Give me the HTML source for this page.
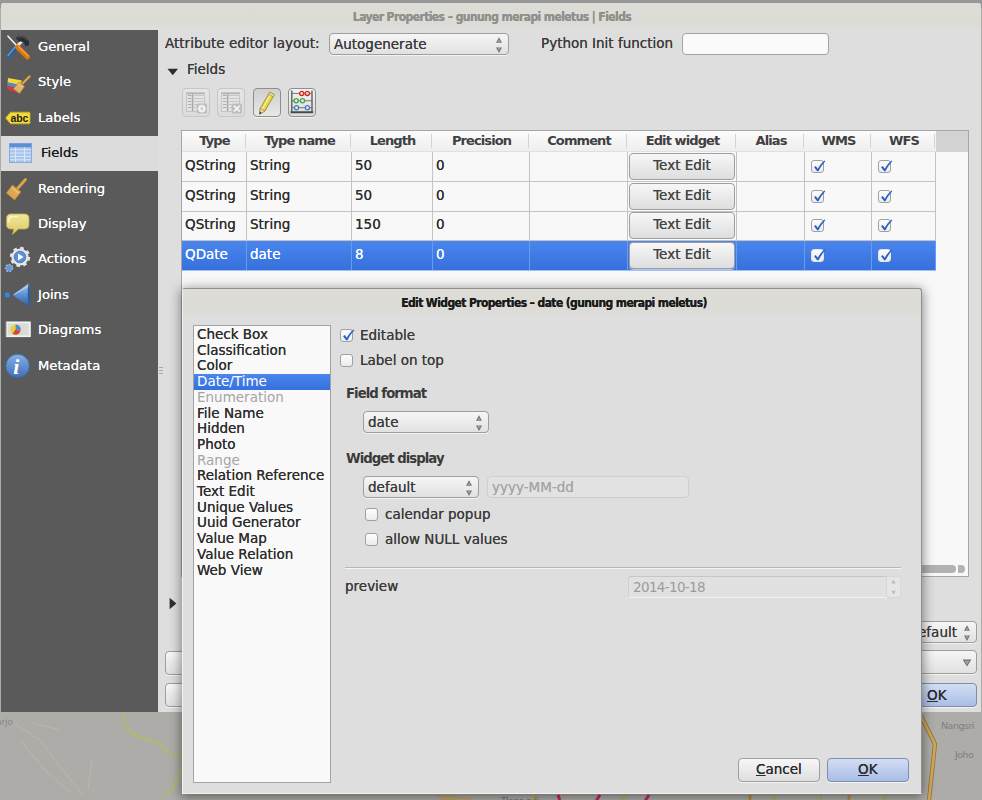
<!DOCTYPE html>
<html>
<head>
<meta charset="utf-8">
<title>Layer Properties</title>
<style>
*{box-sizing:border-box;margin:0;padding:0}
html,body{width:982px;height:800px;overflow:hidden}
body{position:relative;background:#adaca8;font-family:"DejaVu Sans","Liberation Sans",sans-serif;font-size:13.5px;color:#3c3c3c;}
.abs{position:absolute}
.t{position:absolute;white-space:nowrap;line-height:16px;text-shadow:0 0 0.3px}
.combo .tx{text-shadow:0 0 0.3px}
/* main window */
#topband{left:0;top:0;width:982px;height:8px;background:#979699}
#win{left:1px;top:3px;width:980px;height:709px;background:#dedede;border-radius:3px 3px 0 0;overflow:hidden}
#titlebar{left:0;top:0;width:980px;height:27px;background:linear-gradient(#dddcd7 0,#dcdbd5 75%,#dedede 100%)}
#title{left:0;top:7px;width:982px;text-align:center;font-family:"DejaVu Sans Condensed","DejaVu Sans","Liberation Sans",sans-serif;font-size:12px;font-weight:bold;color:#8f8f8c;line-height:14px;letter-spacing:-0.58px}
#side{left:0;top:26.5px;width:157px;height:682.5px;background:#5a5a5a}
.si{position:absolute;left:0;width:157px;height:35.4px}
.si .lb{position:absolute;left:37px;top:8.5px;color:#fff;font-size:13.15px;line-height:17px;white-space:nowrap;text-shadow:0 0 0.6px #fff}
.si.sel{background:#dcdcdc}
.si.sel .lb{color:#1e1e1e;left:40px;text-shadow:0 0 0.6px #1e1e1e}
.si svg{position:absolute;left:4px;top:4px}
/* widgets */
.combo{position:absolute;border:1px solid #9e9e9e;border-radius:4px;background:linear-gradient(#f6f6f6,#e1e1e1);box-shadow:0 1px 0 rgba(255,255,255,.6)}
.combo .tx{position:absolute;left:4px;top:2px;line-height:16px;white-space:nowrap}
.input{position:absolute;border:1px solid #a3a3a3;border-radius:4px;background:#fafafa}
.btn{position:absolute;border:1px solid #9e9e9e;border-radius:4px;background:linear-gradient(#f7f7f7,#dedede);text-align:center;box-shadow:0 1px 0 rgba(255,255,255,.6)}
.btn.def{border-color:#7d8db0;background:linear-gradient(#d3def3,#a9bde6)}
.cb{position:absolute;width:13px;height:13px;border:1px solid #a0a0a0;border-radius:3px;background:linear-gradient(#fdfdfd,#ececec)}
.cb svg{position:absolute;left:-1px;top:-3px}
/* table */
#tbl{left:180px;top:127px;width:788px;height:447px;border:1px solid #a6a6a6;background:#f8f8f8}
.hd{position:absolute;top:0;height:21px;background:linear-gradient(#fbfbfb,#eeeeee);font-weight:bold;text-align:center;line-height:20px;font-size:13px;color:#404040;letter-spacing:-0.9px;border-bottom:1px solid #e0e0e0}
.row{position:absolute;left:0;width:754px;height:30px;border-bottom:1px solid #c4c4c4}
.cell{text-shadow:0 0 0.35px currentColor;color:#2e2e2e;position:absolute;top:0;height:29px;border-right:1px solid #c4c4c4;line-height:27px;padding-left:3px;white-space:nowrap}
.row.sel{background:linear-gradient(#4a86ee,#3670dc)}
.row.sel .cell{color:#fff}
.row.sel .cb{border-color:#e4e4e4}
.row.sel{border-bottom-color:#a4c0f2}
.row.sel .cell{border-right-color:#6c9af0}
.t.b{text-shadow:none;font-weight:bold;font-size:13.3px;letter-spacing:-1px;color:#3a3a3a}
.input.dis{background:#e2e2e2;border-color:#cfcfcf}
.hd:after{content:"";position:absolute;right:1px;top:3px;height:14px;width:1px;background:#d4d4d4}
/* dialog */
#dlg{left:182px;top:288px;width:740px;height:506px;background:#dedede;box-shadow:0 2px 12px 1px rgba(0,0,0,.45);border-radius:3px 3px 0 0}
#dlg:before{content:"";position:absolute;left:0;top:0;right:0;bottom:0;border-top:1px solid #8e8e8e;border-right:1px solid #8e8e8e;border-left:1px solid #f2f2f2;border-bottom:1px solid #f2f2f2;border-radius:3px 3px 0 0;z-index:3;pointer-events:none}
#dtitlebar{left:0;top:0;width:740px;height:29px;background:linear-gradient(#dddcd7 0,#dcdbd6 75%,#dedede 100%);border-radius:3px 3px 0 0}
#dtitle{left:0;top:8px;width:739px;padding-left:5px;text-align:center;font-family:"DejaVu Sans Condensed","DejaVu Sans","Liberation Sans",sans-serif;font-size:12px;font-weight:bold;color:#1c1c1c;line-height:14px;letter-spacing:-0.61px}
#list{left:11px;top:37px;width:138px;height:458px;padding-top:0;border:1px solid #a3a3a3;background:#f9f9f9}
.li{position:absolute;margin-top:1px;left:0;width:136px;height:15.7px;line-height:15.7px;padding-left:3px;white-space:nowrap;color:#2e2e2e;text-shadow:0 0 0.35px #2e2e2e}
.li.dis{color:#a5a5a5;text-shadow:none}
.li.sel{background:linear-gradient(#4a86ee,#3670dc);color:#fff;text-shadow:none}
</style>
</head>
<body>
<div class="abs" id="topband"></div>

<!-- map fragments -->
<svg class="abs" style="left:0;top:712px" width="982" height="88" viewBox="0 712 982 88">
  <rect x="0" y="712" width="982" height="88" fill="#adaca8"/>
  <path d="M123 712 C123 724 128 733 138 736 C152 740 160 743 166 750 C171 756 177 757 182 756" fill="none" stroke="#b5ba68" stroke-width="1.9"/>
  <path d="M182 766 C178 776 176 784 172 790 C170 793 167 790 164 794" fill="none" stroke="#b5ba68" stroke-width="1.9"/>
  <path d="M12 722 L40 740 L58 764 L84 796 M20 740 L45 770 L70 792 M88 790 L92 760 M60 730 L30 722" fill="none" stroke="#b9b7b1" stroke-width="1"/>
  <path d="M921 716 L935 744 L929 800" fill="none" stroke="#8f7440" stroke-width="4.2" stroke-linejoin="round"/>
  <path d="M921 716 L935 744 L929 800" fill="none" stroke="#d2a954" stroke-width="2.6" stroke-linejoin="round"/>
  <text x="941" y="729" font-size="9.5" fill="#7f7f7c" font-family="DejaVu Sans, Liberation Sans, sans-serif" letter-spacing="-0.5">Nangsri</text>
  <text x="955" y="758" font-size="9.5" fill="#7f7f7c" font-family="DejaVu Sans, Liberation Sans, sans-serif" letter-spacing="-0.5">Joho</text>
  <text x="-4" y="725" font-size="9.5" fill="#8a8a86" font-family="DejaVu Sans, Liberation Sans, sans-serif" letter-spacing="-0.4">arjo</text>
  <!-- strip below the dialog -->
  <path d="M437 796 C450 797 462 797 471 800 M440 800 C452 799 460 800 466 802" fill="none" stroke="#c9a352" stroke-width="1.6"/>
  <text x="501" y="804" font-size="9" fill="#77777a" font-family="DejaVu Sans, Liberation Sans, sans-serif" letter-spacing="-0.4">Tlogo adi</text>
  <path d="M536 795 L532 801" fill="none" stroke="#c9a93a" stroke-width="2"/>
  <path d="M558 795 L560 801 M600 795 L596 801 M649 795 L645 801" fill="none" stroke="#bf2d5c" stroke-width="3"/>
  <path d="M626 795 L622 801 M772 795 L776 801 M821 795 L821 801 M887 795 L883 801" fill="none" stroke="#a9b45a" stroke-width="2"/>
  <path d="M750 795 V801 M849 795 V801" fill="none" stroke="#b98f45" stroke-width="3"/>
</svg>

<div class="abs" id="win">
  <div class="abs" id="titlebar"></div>
  <div class="t" id="title">Layer Properties – gunung merapi meletus | Fields</div>
  <div class="abs" id="side">
    <div class="si" style="top:0"><span class="lb">General</span></div>
    <div class="si" style="top:35.4px"><span class="lb">Style</span></div>
    <div class="si" style="top:70.8px"><span class="lb">Labels</span></div>
    <div class="si sel" style="top:106.2px"><span class="lb">Fields</span></div>
    <div class="si" style="top:141.6px"><span class="lb">Rendering</span></div>
    <div class="si" style="top:177px"><span class="lb">Display</span></div>
    <div class="si" style="top:212.4px"><span class="lb">Actions</span></div>
    <div class="si" style="top:247.8px"><span class="lb">Joins</span></div>
    <div class="si" style="top:283.2px"><span class="lb">Diagrams</span></div>
    <div class="si" style="top:318.6px"><span class="lb">Metadata</span></div>
  </div>

  <div class="abs" style="left:158px;top:364px;width:4px;height:7px;border-top:1px solid #a8a8a8;border-bottom:1px solid #a8a8a8"><div class="abs" style="left:0;top:2px;width:4px;height:1px;background:#a8a8a8"></div></div>
  <!-- top controls -->
  <div class="t" style="left:164px;top:32px">Attribute editor layout:</div>
  <div class="combo" style="left:328px;top:30px;width:180px;height:22px"><span class="tx">Autogenerate</span><svg class="abs" style="right:5px;top:3px" width="8" height="17" viewBox="0 -0.5 8 17" overflow="visible"><path d="M4 -0.2 L7 5.2 L1 5.2 Z" fill="#757575"/><path d="M1 9.9 L7 9.9 L4 15.4 Z" fill="#757575"/><path d="M4 2 L5.2 4.3 L2.8 4.3 Z" fill="#e9e9e9" opacity=".5"/><path d="M2.8 10.8 L5.2 10.8 L4 13 Z" fill="#e9e9e9" opacity=".5"/></svg></div>
  <div class="t" style="left:540px;top:32px">Python Init function</div>
  <div class="input" style="left:681px;top:30px;width:147px;height:22px"></div>
  <div class="t" style="left:186px;top:58px">Fields</div>


  <!-- collapse triangle + toolbar -->
  <svg class="abs" style="left:165.5px;top:65px" width="12" height="8" viewBox="0 0 12 8"><path d="M0.5 0.8 L11 0.8 L5.75 7.2 Z" fill="#2e2e2e"/></svg>
  <div class="btn tb" style="left:181px;top:85px;width:28px;height:29px;border-color:#c6c6c6;background:linear-gradient(#e6e6e6,#dcdcdc);box-shadow:none">
    <svg class="abs" style="left:-1px;top:-1px" width="28" height="29" viewBox="0 0 28 29"><rect x="4.5" y="4.5" width="18" height="19" fill="#e4e4e4" stroke="#c2c2c2" stroke-width="0.9"/><path d="M10.6 5 V23" stroke="#a9a9a9" stroke-width="1.5"/><path d="M6 7.5 H9.4 M6 10.5 H9.4 M6 13.5 H9.4 M6 16.5 H9.4 M6 19.5 H9.4" stroke="#adadad" stroke-width="1"/><path d="M12 7.5 H21.5 M12 10.5 H21.5 M12 13.5 H21.5 M12 16.5 H21.5 M12 19.5 H21.5" stroke="#c6c6c6" stroke-width="1"/><path d="M5 5.6 H22" stroke="#b5b5b5" stroke-width="1.2"/><rect x="14.6" y="15.6" width="10.4" height="10" rx="1.4" fill="#bdbdbd"/><circle cx="19.8" cy="20.6" r="2.9" fill="none" stroke="#f2f2f2" stroke-width="1.5"/><path d="M19.8 16.4 V24.8 M15.6 20.6 H24 M16.9 17.7 L22.7 23.5 M22.7 17.7 L16.9 23.5" stroke="#f2f2f2" stroke-width="1.1"/><circle cx="19.8" cy="20.6" r="1.2" fill="#bdbdbd"/></svg>
  </div>
  <div class="btn tb" style="left:216px;top:85px;width:28px;height:29px;border-color:#c6c6c6;background:linear-gradient(#e6e6e6,#dcdcdc);box-shadow:none">
    <svg class="abs" style="left:-1px;top:-1px" width="28" height="29" viewBox="0 0 28 29"><rect x="4.5" y="4.5" width="18" height="19" fill="#e4e4e4" stroke="#c2c2c2" stroke-width="0.9"/><path d="M10.6 5 V23" stroke="#a9a9a9" stroke-width="1.5"/><path d="M6 7.5 H9.4 M6 10.5 H9.4 M6 13.5 H9.4 M6 16.5 H9.4 M6 19.5 H9.4" stroke="#adadad" stroke-width="1"/><path d="M12 7.5 H21.5 M12 10.5 H21.5 M12 13.5 H21.5 M12 16.5 H21.5 M12 19.5 H21.5" stroke="#c6c6c6" stroke-width="1"/><path d="M5 5.6 H22" stroke="#b5b5b5" stroke-width="1.2"/><rect x="14.6" y="15.6" width="10.4" height="10" rx="1.4" fill="#bdbdbd"/><path d="M16.8 17.6 L22.8 23.6 M22.8 17.6 L16.8 23.6" stroke="#f4f4f4" stroke-width="1.7"/></svg>
  </div>
  <div class="btn tb" style="left:252px;top:85px;width:28px;height:29px;border-color:#8e8e8e;background:linear-gradient(#d0d0d0,#e8e8e8)">
    <svg class="abs" style="left:-1px;top:-1px" width="28" height="29" viewBox="0 0 28 29"><path d="M16.6 4.2 L21.4 6.6 L12 23 L6.6 26.2 L7.2 20.4 Z" fill="#e6d248" stroke="#9d8f2c" stroke-width="0.9" stroke-linejoin="round"/><path d="M18.2 5.6 L9 21.6" stroke="#f6ec9a" stroke-width="1.4"/><path d="M16.6 4.2 L21.4 6.6 L20.2 8.8 L15.4 6.3 Z" fill="#e3e0b0" stroke="#9d8f2c" stroke-width="0.6"/><path d="M7.2 20.4 L12 23 L6.6 26.2 Z" fill="#e9d9b8" stroke="#8c7a4a" stroke-width="0.6"/><path d="M6.9 23.6 L8.6 24.9 L6.6 26.2 Z" fill="#2e2e2e"/></svg>
  </div>
  <div class="btn tb" style="left:287px;top:85px;width:28px;height:29px;border-color:#8e8e8e;background:linear-gradient(#f2f2f2,#dcdcdc)">
    <svg class="abs" style="left:-1px;top:-1px" width="28" height="29" viewBox="0 0 28 29"><path d="M3.8 2.4 V24 M24 2.4 V24" stroke="#555" stroke-width="1.3"/><path d="M3.8 5.4 H24 M3.8 12.8 H24 M3.8 19.7 H24" stroke="#6a6a6a" stroke-width="0.9"/><path d="M2.6 24.2 H25.2" stroke="#4a4a4a" stroke-width="1.9"/><circle cx="13.7" cy="5.4" r="2.1" fill="#f6d6d6" stroke="#cf2a2a" stroke-width="1.3"/><circle cx="19.3" cy="5.4" r="2.1" fill="#f6d6d6" stroke="#cf2a2a" stroke-width="1.3"/><circle cx="8.2" cy="12.8" r="2.1" fill="#d9efd9" stroke="#49a24a" stroke-width="1.3"/><circle cx="14.5" cy="12.8" r="2.1" fill="#d9efd9" stroke="#49a24a" stroke-width="1.3"/><circle cx="8.5" cy="19.7" r="2.1" fill="#dbe8f5" stroke="#3f7fbe" stroke-width="1.3"/><circle cx="19.4" cy="19.7" r="2.1" fill="#dbe8f5" stroke="#3f7fbe" stroke-width="1.3"/></svg>
  </div>

  <!-- table -->
  <div class="abs" id="tbl">
    <div class="abs" style="left:0;top:0;width:786px;height:21px;background:#d2d2d2"></div>
    <div class="hd" style="left:0;width:65px">Type</div>
    <div class="hd" style="left:65px;width:105px">Type name</div>
    <div class="hd" style="left:170px;width:81px">Length</div>
    <div class="hd" style="left:251px;width:97px">Precision</div>
    <div class="hd" style="left:348px;width:98px">Comment</div>
    <div class="hd" style="left:446px;width:109px">Edit widget</div>
    <div class="hd" style="left:555px;width:68px">Alias</div>
    <div class="hd" style="left:623px;width:67px">WMS</div>
    <div class="hd" style="left:690px;width:64px">WFS</div>
    <div class="row" style="top:21.0px"><div class="cell" style="left:0px;width:65px">QString</div><div class="cell" style="left:65px;width:105px">String</div><div class="cell" style="left:170px;width:81px">50</div><div class="cell" style="left:251px;width:97px">0</div><div class="cell" style="left:348px;width:98px"></div><div class="cell" style="left:446px;width:109px;padding:0"><div class="btn" style="left:1px;top:1px;width:106px;height:27px;line-height:23px;color:#454545;text-shadow:0 0 0.2px">Text Edit</div></div><div class="cell" style="left:555px;width:68px"></div><div class="cell" style="left:623px;width:67px"><div class="cb" style="left:6px;top:8px"><svg width="16" height="17" viewBox="0 0 16 17"><path d="M3.1 9.3 L4.7 7.9 L6.8 10.8 C8.6 7.5 10.6 4.9 13.6 2.5 L14.3 3.3 C11.7 6.1 9.6 9.3 7.5 13.2 L6.2 13.2 Z" fill="#2a5fc4"/></svg></div></div><div class="cell" style="left:690px;width:64px"><div class="cb" style="left:6px;top:8px"><svg width="16" height="17" viewBox="0 0 16 17"><path d="M3.1 9.3 L4.7 7.9 L6.8 10.8 C8.6 7.5 10.6 4.9 13.6 2.5 L14.3 3.3 C11.7 6.1 9.6 9.3 7.5 13.2 L6.2 13.2 Z" fill="#2a5fc4"/></svg></div></div></div>
    <div class="row" style="top:50.5px"><div class="cell" style="left:0px;width:65px">QString</div><div class="cell" style="left:65px;width:105px">String</div><div class="cell" style="left:170px;width:81px">50</div><div class="cell" style="left:251px;width:97px">0</div><div class="cell" style="left:348px;width:98px"></div><div class="cell" style="left:446px;width:109px;padding:0"><div class="btn" style="left:1px;top:1px;width:106px;height:27px;line-height:23px;color:#454545;text-shadow:0 0 0.2px">Text Edit</div></div><div class="cell" style="left:555px;width:68px"></div><div class="cell" style="left:623px;width:67px"><div class="cb" style="left:6px;top:8px"><svg width="16" height="17" viewBox="0 0 16 17"><path d="M3.1 9.3 L4.7 7.9 L6.8 10.8 C8.6 7.5 10.6 4.9 13.6 2.5 L14.3 3.3 C11.7 6.1 9.6 9.3 7.5 13.2 L6.2 13.2 Z" fill="#2a5fc4"/></svg></div></div><div class="cell" style="left:690px;width:64px"><div class="cb" style="left:6px;top:8px"><svg width="16" height="17" viewBox="0 0 16 17"><path d="M3.1 9.3 L4.7 7.9 L6.8 10.8 C8.6 7.5 10.6 4.9 13.6 2.5 L14.3 3.3 C11.7 6.1 9.6 9.3 7.5 13.2 L6.2 13.2 Z" fill="#2a5fc4"/></svg></div></div></div>
    <div class="row" style="top:80.0px"><div class="cell" style="left:0px;width:65px">QString</div><div class="cell" style="left:65px;width:105px">String</div><div class="cell" style="left:170px;width:81px">150</div><div class="cell" style="left:251px;width:97px">0</div><div class="cell" style="left:348px;width:98px"></div><div class="cell" style="left:446px;width:109px;padding:0"><div class="btn" style="left:1px;top:1px;width:106px;height:27px;line-height:23px;color:#454545;text-shadow:0 0 0.2px">Text Edit</div></div><div class="cell" style="left:555px;width:68px"></div><div class="cell" style="left:623px;width:67px"><div class="cb" style="left:6px;top:8px"><svg width="16" height="17" viewBox="0 0 16 17"><path d="M3.1 9.3 L4.7 7.9 L6.8 10.8 C8.6 7.5 10.6 4.9 13.6 2.5 L14.3 3.3 C11.7 6.1 9.6 9.3 7.5 13.2 L6.2 13.2 Z" fill="#2a5fc4"/></svg></div></div><div class="cell" style="left:690px;width:64px"><div class="cb" style="left:6px;top:8px"><svg width="16" height="17" viewBox="0 0 16 17"><path d="M3.1 9.3 L4.7 7.9 L6.8 10.8 C8.6 7.5 10.6 4.9 13.6 2.5 L14.3 3.3 C11.7 6.1 9.6 9.3 7.5 13.2 L6.2 13.2 Z" fill="#2a5fc4"/></svg></div></div></div>
    <div class="row sel" style="top:109.5px"><div class="cell" style="left:0px;width:65px">QDate</div><div class="cell" style="left:65px;width:105px">date</div><div class="cell" style="left:170px;width:81px">8</div><div class="cell" style="left:251px;width:97px">0</div><div class="cell" style="left:348px;width:98px"></div><div class="cell" style="left:446px;width:109px;padding:0"><div class="btn" style="left:1px;top:1px;width:106px;height:27px;line-height:23px;color:#454545;text-shadow:0 0 0.2px">Text Edit</div></div><div class="cell" style="left:555px;width:68px"></div><div class="cell" style="left:623px;width:67px"><div class="cb" style="left:6px;top:8px"><svg width="16" height="17" viewBox="0 0 16 17"><path d="M3.1 9.3 L4.7 7.9 L6.8 10.8 C8.6 7.5 10.6 4.9 13.6 2.5 L14.3 3.3 C11.7 6.1 9.6 9.3 7.5 13.2 L6.2 13.2 Z" fill="#2a5fc4"/></svg></div></div><div class="cell" style="left:690px;width:64px"><div class="cb" style="left:6px;top:8px"><svg width="16" height="17" viewBox="0 0 16 17"><path d="M3.1 9.3 L4.7 7.9 L6.8 10.8 C8.6 7.5 10.6 4.9 13.6 2.5 L14.3 3.3 C11.7 6.1 9.6 9.3 7.5 13.2 L6.2 13.2 Z" fill="#2a5fc4"/></svg></div></div></div>
    <div class="abs" style="left:540px;top:434px;width:234px;height:8px;border-radius:4px;background:#b2b2b2"></div>
    <div class="abs" style="left:776px;top:434px;width:7px;height:8px;border-radius:1px 4px 4px 1px;background:#b2b2b2"></div>
  </div>

  <!-- bottom controls behind dialog -->

  <svg class="abs" style="left:168px;top:594px" width="8" height="13" viewBox="0 0 8 13"><path d="M0.6 0.8 L7.4 6.5 L0.6 12.2 Z" fill="#2e2e2e"/></svg>
  <div class="btn" style="left:164px;top:648px;width:60px;height:24px"></div>
  <div class="btn" style="left:164px;top:680px;width:60px;height:24px"></div>
  <div class="combo" style="left:861px;top:618px;width:115px;height:22px"><span class="tx" style="left:auto;right:19px">default</span><svg class="abs" style="right:5px;top:3px" width="8" height="17" viewBox="0 -0.5 8 17" overflow="visible"><path d="M4 -0.2 L7 5.2 L1 5.2 Z" fill="#757575"/><path d="M1 9.9 L7 9.9 L4 15.4 Z" fill="#757575"/><path d="M4 2 L5.2 4.3 L2.8 4.3 Z" fill="#e9e9e9" opacity=".5"/><path d="M2.8 10.8 L5.2 10.8 L4 13 Z" fill="#e9e9e9" opacity=".5"/></svg></div>
  <div class="combo" style="left:861px;top:647px;width:115px;height:24px"><svg class="abs" style="right:4px;top:8px" width="10" height="8" viewBox="0 0 10 8"><path d="M0.6 0.6 L9.4 0.6 L5 7.4 Z" fill="#6e6e6e"/><path d="M2.6 1.8 L7.4 1.8 L5 5.4 Z" fill="#e9e9e9" opacity=".45"/></svg></div>
  <div class="btn def" style="left:881px;top:680px;width:95px;height:24px"><span class="t" style="left:44px;top:3px;color:#2b2b2b"><u>O</u>K</span></div>
</div>


<!-- sidebar icons (page coordinates) -->
<svg class="abs" style="left:0;top:29px" width="40" height="361" viewBox="0 29 40 361">
  <defs>
    <linearGradient id="gBlue" x1="0" y1="0" x2="0" y2="1"><stop offset="0" stop-color="#86b0e6"/><stop offset="1" stop-color="#3f6fb5"/></linearGradient>
    <linearGradient id="gCone" x1="0" y1="0" x2="0" y2="1"><stop offset="0" stop-color="#a7c6ee"/><stop offset=".5" stop-color="#5b8fd3"/><stop offset="1" stop-color="#2f5f9f"/></linearGradient>
    <linearGradient id="gYel" x1="0" y1="0" x2="0" y2="1"><stop offset="0" stop-color="#f3e79a"/><stop offset="1" stop-color="#dcc763"/></linearGradient>
  </defs>
  <!-- General: hammer + screwdriver -->
  <g>
    <path d="M16 47 L8.5 56.5" stroke="#2d5f9e" stroke-width="4.6" stroke-linecap="round"/>
    <path d="M15.2 46.6 L8 55.6" stroke="#6d9bd6" stroke-width="1.3" stroke-linecap="round"/>
    <path d="M17 46.5 L21.5 41.5" stroke="#e8e4dc" stroke-width="3" />
    <path d="M15.8 38.2 C18.5 34.6 25.5 34.8 29.2 41.6 L28.6 45.8 L25.2 46 C24.6 42.6 22.4 40.8 19.4 41.9 Z" fill="#2a2d31"/><path d="M17.6 38 C20.4 36 24.6 36.6 27.2 40.6" fill="none" stroke="#5a6067" stroke-width="0.9"/>
    <path d="M8 36.2 L17 46" stroke="#f3f3f3" stroke-width="1.6" stroke-linecap="round"/>
    <path d="M17.5 47 L27.5 57" stroke="#e2770f" stroke-width="4.8" stroke-linecap="round"/>
    <path d="M18.5 46.4 L28.2 56" stroke="#f5a24a" stroke-width="1.2" stroke-linecap="round"/>
  </g>
  <!-- Style: flag + brush -->
  <g>
    <path d="M8 78 L22 80.5 L20 85 L7.6 82.4 Z" fill="#f0d93a"/>
    <path d="M7.6 82.4 L20 85 L18.5 88.5 L7.2 86 Z" fill="#5d86c8"/>
    <path d="M7.2 86 L18.5 88.5 L17 92.5 L7.4 89.6 Z" fill="#d63b3b"/>
    <path d="M22.5 83.5 L29.5 76.5" stroke="#d9a545" stroke-width="2.4" stroke-linecap="round"/>
    <path d="M19 82 L24.5 86.5 L19.5 93.5 L13.5 88.8 Z" fill="#dfb46a" stroke="#b98a3a" stroke-width="0.7"/>
    <path d="M18 84 L22.6 87.4" stroke="#f0d49a" stroke-width="1"/>
  </g>
  <!-- Labels: abc tag -->
  <g>
    <path d="M5.6 118 L10.5 112.2 L29 112.2 Q30 112.2 30 113.2 L30 122.8 Q30 123.8 29 123.8 L10.5 123.8 Z" fill="#f1d83b" stroke="#c9ad1d" stroke-width="0.8"/>
    <text x="10.6" y="121.6" font-family="Liberation Sans, DejaVu Sans, sans-serif" font-weight="bold" font-size="10.5" fill="#1d1d1d" letter-spacing="-0.2">abc</text>
  </g>
  <!-- Fields: table -->
  <g>
    <rect x="9" y="143" width="23" height="20" fill="#aac5ec"/>
    <rect x="9" y="143" width="23" height="4.2" fill="#5d8fd6"/>
    <path d="M9.5 149.6 H31.5 M9.5 153 H31.5 M9.5 156.4 H31.5 M9.5 159.8 H31.5" stroke="#dfeafa" stroke-width="0.9"/>
    <path d="M15.5 147.5 V162.5 M24.5 147.5 V162.5" stroke="#dfeafa" stroke-width="0.9"/>
    <rect x="9.4" y="143.4" width="22.2" height="19.2" fill="none" stroke="#7fa3dc" stroke-width="0.8"/>
  </g>
  <!-- Rendering: brush -->
  <g>
    <path d="M17.5 188.5 L25.5 179.5" stroke="#d9a545" stroke-width="2.8" stroke-linecap="round"/>
    <path d="M12.5 185 L21 191.8 L14.6 200 L6.4 193 Z" fill="#dca750" stroke="#b98634" stroke-width="0.7"/>
    <path d="M11.6 187.4 L18.8 193.2" stroke="#efcb86" stroke-width="1.2"/>
  </g>
  <!-- Display: speech bubble -->
  <g>
    <path d="M11 214 H24.5 Q29 214 29 218.5 V224.5 Q29 229 24.5 229 H18.5 L12.5 234.5 L13.8 229 H11 Q6.5 229 6.5 224.5 V218.5 Q6.5 214 11 214 Z" fill="url(#gYel)" stroke="#c4ad45" stroke-width="0.8"/>
    <path d="M9 222 V219.5 Q9 216.6 12 216.6 H17" fill="none" stroke="#fbf6d2" stroke-width="1.4" stroke-linecap="round"/>
  </g>
  <!-- Actions: gears -->
  <g>
    <circle cx="20" cy="257" r="8.6" fill="#e3e3e3" stroke="#e3e3e3" stroke-width="3.2" stroke-dasharray="3.4 3.35"/>
    <circle cx="20" cy="257" r="8" fill="#e6e6e6"/>
    <circle cx="20" cy="257" r="5.8" fill="#5c90d8" stroke="#3b6cb4" stroke-width="0.8"/>
    <path d="M18 253.6 L23.6 257 L18 260.4 Z" fill="#ffffff"/>
    <circle cx="9" cy="268" r="3.4" fill="#6f9ad4" stroke="#9fb9dd" stroke-width="1.8" stroke-dasharray="1.6 1.5"/>
    <circle cx="9" cy="268" r="2.6" fill="#6a97d3"/>
  </g>
  <!-- Joins -->
  <g>
    <circle cx="7.2" cy="295" r="3" fill="#4d7fc4" stroke="#2d5a9a" stroke-width="0.6"/>
    <path d="M12.5 295 L28.5 283.6 Q31.5 295 29 306.4 Z" fill="url(#gCone)"/>
    <path d="M28.5 283.6 Q32.6 295 29 306.4 Q26.6 295 28.5 283.6 Z" fill="#2f5d9c"/>
    <path d="M14.5 294.4 L27.6 286.4" stroke="#d2e2f8" stroke-width="1.1" opacity=".8"/>
  </g>
  <!-- Diagrams -->
  <g>
    <rect x="6.4" y="322" width="23.8" height="14.6" fill="#ecece8" stroke="#fafafa" stroke-width="1"/>
    <path d="M6 321.4 V337.2" stroke="#8a8a8a" stroke-width="0.9"/>
    <rect x="8" y="323.4" width="20.8" height="11.8" fill="#dcdcd6"/>
    <circle cx="15.6" cy="329.6" r="5.2" fill="#e9cf3c"/>
    <path d="M15.6 329.6 L15.6 324.4 A5.2 5.2 0 0 1 20.4 331.6 Z" fill="#5b86cc"/>
    <path d="M15.6 329.6 L20.4 331.6 A5.2 5.2 0 0 1 12.6 333.8 Z" fill="#d8453d"/>
  </g>
  <!-- Metadata -->
  <g>
    <circle cx="17.6" cy="366" r="11.8" fill="url(#gBlue)" stroke="#3a66a6" stroke-width="0.8"/>
    <text x="13.2" y="374" font-family="Liberation Serif, DejaVu Serif, serif" font-style="italic" font-weight="bold" font-size="22" fill="#ffffff">i</text>
  </g>
</svg>

<!-- dialog -->
<div class="abs" id="dlg">
  <div class="abs" id="dtitlebar"></div>
  <div class="t" id="dtitle">Edit Widget Properties – date (gunung merapi meletus)</div>
  <div class="abs" id="list">
    <div class="li" style="top:0">Check Box</div>
    <div class="li" style="top:15.7px">Classification</div>
    <div class="li" style="top:31.4px">Color</div>
    <div class="li sel" style="top:47.1px">Date/Time</div>
    <div class="li dis" style="top:62.8px">Enumeration</div>
    <div class="li" style="top:78.5px">File Name</div>
    <div class="li" style="top:94.2px">Hidden</div>
    <div class="li" style="top:109.9px">Photo</div>
    <div class="li dis" style="top:125.6px">Range</div>
    <div class="li" style="top:141.3px">Relation Reference</div>
    <div class="li" style="top:157px">Text Edit</div>
    <div class="li" style="top:172.7px">Unique Values</div>
    <div class="li" style="top:188.4px">Uuid Generator</div>
    <div class="li" style="top:204.1px">Value Map</div>
    <div class="li" style="top:219.8px">Value Relation</div>
    <div class="li" style="top:235.5px">Web View</div>
  </div>

  <!-- dialog right pane (coords relative to dialog: page x-182, y-288) -->
  <div class="cb" style="left:158px;top:41px"><svg width="16" height="17" viewBox="0 0 16 17"><path d="M3.1 9.3 L4.7 7.9 L6.8 10.8 C8.6 7.5 10.6 4.9 13.6 2.5 L14.3 3.3 C11.7 6.1 9.6 9.3 7.5 13.2 L6.2 13.2 Z" fill="#2a5fc4"/></svg></div>
  <div class="t" style="left:178px;top:39px">Editable</div>
  <div class="cb" style="left:158px;top:66px"></div>
  <div class="t" style="left:178px;top:64px">Label on top</div>
  <div class="t b" style="left:164px;top:98px">Field format</div>
  <div class="combo" style="left:181px;top:123px;width:126px;height:22px"><span class="tx">date</span><svg class="abs" style="right:5px;top:3px" width="8" height="17" viewBox="0 -0.5 8 17" overflow="visible"><path d="M4 -0.2 L7 5.2 L1 5.2 Z" fill="#757575"/><path d="M1 9.9 L7 9.9 L4 15.4 Z" fill="#757575"/><path d="M4 2 L5.2 4.3 L2.8 4.3 Z" fill="#e9e9e9" opacity=".5"/><path d="M2.8 10.8 L5.2 10.8 L4 13 Z" fill="#e9e9e9" opacity=".5"/></svg></div>
  <div class="t b" style="left:164px;top:163px">Widget display</div>
  <div class="combo" style="left:181px;top:188px;width:116px;height:22px"><span class="tx">default</span><svg class="abs" style="right:5px;top:3px" width="8" height="17" viewBox="0 -0.5 8 17" overflow="visible"><path d="M4 -0.2 L7 5.2 L1 5.2 Z" fill="#757575"/><path d="M1 9.9 L7 9.9 L4 15.4 Z" fill="#757575"/><path d="M4 2 L5.2 4.3 L2.8 4.3 Z" fill="#e9e9e9" opacity=".5"/><path d="M2.8 10.8 L5.2 10.8 L4 13 Z" fill="#e9e9e9" opacity=".5"/></svg></div>
  <div class="input dis" style="left:305px;top:188px;width:202px;height:22px"><span class="t" style="left:4px;top:2px;color:#a6a6a6">yyyy-MM-dd</span></div>
  <div class="cb" style="left:183px;top:220px"></div>
  <div class="t" style="left:203px;top:218px">calendar popup</div>
  <div class="cb" style="left:183px;top:245px"></div>
  <div class="t" style="left:203px;top:243px">allow NULL values</div>
  <div class="abs" style="left:163px;top:279px;width:556px;height:2px;border-top:1px solid #b8b8b8;border-bottom:1px solid #f6f6f6"></div>
  <div class="t" style="left:163px;top:290px">preview</div>
  <div class="abs" style="left:446px;top:288px;width:273px;height:22px">
    <div class="abs" style="left:0;top:0;width:259px;height:22px;background:#e1e1e1;border-top:1px solid #c6c6c6;border-left:1px solid #d0d0d0;border-bottom:1px solid #f1f1f1;border-radius:3px 0 0 3px"></div>
    <span class="t" style="left:5px;top:3px;color:#9c9c9c;letter-spacing:-0.65px;text-shadow:none">2014-10-18</span>
    <div class="abs" style="left:258px;top:0;width:15px;height:22px;background:#e6e6e6;border:1px solid #d7d7d7;border-radius:3px"></div>
    <svg class="abs" style="left:261px;top:2px" width="9" height="18" viewBox="0 0 9 18"><path d="M4.5 1.6 L6.8 5.4 L2.2 5.4 Z" fill="#bcbcbc"/><path d="M2.2 12.8 L6.8 12.8 L4.5 16.6 Z" fill="#bcbcbc"/></svg>
  </div>
  <div class="btn" style="left:556px;top:470px;width:82px;height:24px"><span class="t" style="left:17px;top:2px;color:#2b2b2b"><u>C</u>ancel</span></div>
  <div class="btn def" style="left:645px;top:470px;width:82px;height:24px"><span class="t" style="left:30px;top:2px;color:#2b2b2b"><u>O</u>K</span></div>
</div>
</body>
</html>
